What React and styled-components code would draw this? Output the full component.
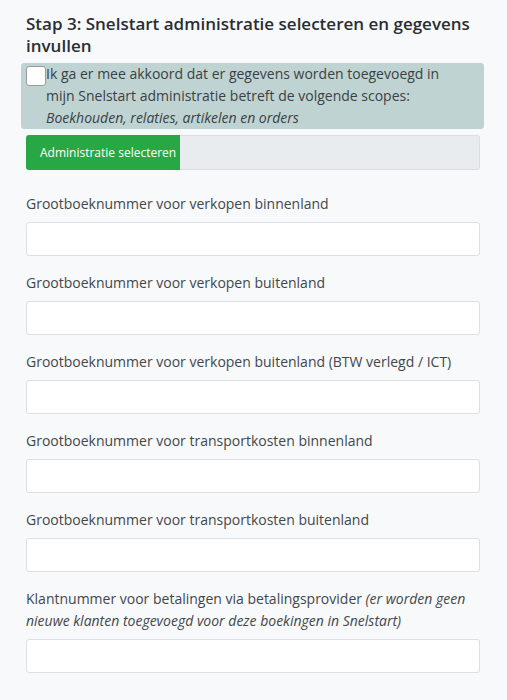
import React from 'react';
import styled, { createGlobalStyle } from 'styled-components';

const fields = [
  { id: 'verkoop-binnen', label: 'Grootboeknummer voor verkopen binnenland' },
  { id: 'verkoop-buiten', label: 'Grootboeknummer voor verkopen buitenland' },
  { id: 'verkoop-ict', label: 'Grootboeknummer voor verkopen buitenland (BTW verlegd / ICT)' },
  { id: 'transport-binnen', label: 'Grootboeknummer voor transportkosten binnenland' },
  { id: 'transport-buiten', label: 'Grootboeknummer voor transportkosten buitenland' },
  {
    id: 'klantnummer',
    label: 'Klantnummer voor betalingen via betalingsprovider',
    note: '(er worden geen nieuwe klanten toegevoegd voor deze boekingen in Snelstart)',
  },
];

export default function App() {
  return (
    <>
      <GlobalStyle />
      <Page>
        <Title>Stap 3: Snelstart administratie selecteren en gegevens invullen</Title>
        <Consent>
          <Checkbox type="checkbox" />
          <span>
            Ik ga er mee akkoord dat er gegevens worden toegevoegd in mijn Snelstart administratie
            betreft de volgende scopes: <em>Boekhouden, relaties, artikelen en orders</em>
          </span>
        </Consent>
        <PickerGroup>
          <PickButton type="button">Administratie selecteren</PickButton>
          <PickValue />
        </PickerGroup>
        <Fields>
          {fields.map((f) => (
            <Field key={f.id}>
              <Label htmlFor={f.id}>
                {f.label}
                {f.note && <em> {f.note}</em>}
              </Label>
              <Input id={f.id} type="text" />
            </Field>
          ))}
        </Fields>
      </Page>
    </>
  );
}

const GlobalStyle = createGlobalStyle`
  html, body {
    margin: 0;
    background: #f8f9fa;
  }
  body {
    font-family: "Open Sans", "Noto Sans", sans-serif;
    font-size: 14px;
    color: #42474c;
  }
`;

const Page = styled.div`
  padding: 13px 27px 30px 26px;
`;

const Title = styled.h3`
  margin: 0 0 6px;
  font-size: 17px;
  line-height: 22px;
  font-weight: 600;
  color: #2a2e33;
`;

const Consent = styled.label`
  display: flex;
  align-items: flex-start;
  margin: 0 -4px 0 -5px;
  padding: 0 29px 0 5px;
  background: #bfd4d2;
  border-radius: 3px;
  line-height: 22px;
  color: #3b4045;

  & em {
    font-style: italic;
  }
`;

const Checkbox = styled.input`
  appearance: none;
  flex: none;
  width: 20px;
  height: 20px;
  margin: 3px 0 0;
  background: #fff;
  border: 1px solid #9a9a9a;
  border-radius: 3px;
`;

const PickerGroup = styled.div`
  display: flex;
  height: 35px;
  margin-top: 6px;
`;

const PickButton = styled.button`
  flex: none;
  padding: 0 4px 0 14px;
  font-family: inherit;
  font-size: 12px;
  color: #fff;
  background: #28a745;
  border: 0;
  border-radius: 3px 0 0 3px;
`;

const PickValue = styled.div`
  flex: 1;
  background: #e9ecef;
  border: 1px solid #dadee2;
  border-left: 0;
  border-radius: 0 3px 3px 0;
`;

const Fields = styled.div`
  display: flex;
  flex-direction: column;
  gap: 16px;
  margin-top: 23px;
`;

const Field = styled.div`
  display: flex;
  flex-direction: column;
  gap: 7px;
`;

const Label = styled.label`
  line-height: 22px;

  & em {
    font-style: italic;
  }
`;

const Input = styled.input`
  box-sizing: border-box;
  height: 34px;
  padding: 0 10px;
  font-family: inherit;
  font-size: 14px;
  background: #fff;
  border: 1px solid #dcdfe3;
  border-radius: 3px;
`;
